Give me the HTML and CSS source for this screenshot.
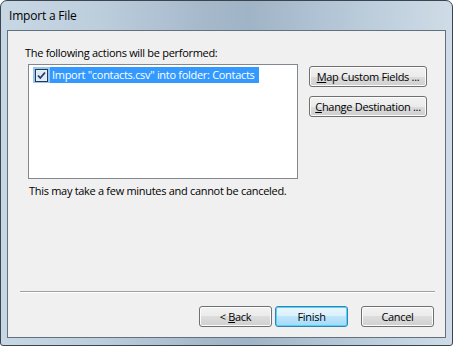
FILE: index.html
```html
<!DOCTYPE html>
<html lang="en">
<head>
    <meta charset="UTF-8">
    <title>Import a File</title>
    <link rel="stylesheet" href="styles.css">
</head>
<body>
    <div class="window">
        <div class="titlebar">Import a File</div>
        <div class="client">
            <p class="intro">The following actions will be performed:</p>
            <div class="main-row">
                <div class="listbox">
                    <div class="list-item">
                        <span class="check-cell">
                            <svg class="checkbox" viewBox="0 0 13 13" width="13" height="13">
                                <rect x="0.5" y="0.5" width="12" height="12" fill="#f4f4f4" stroke="#1c3a5e"/>
                                <rect x="1.5" y="1.5" width="10" height="10" fill="#dfe9f5"/>
                                <path d="M3 6.5L5.3 9L10 3.5" fill="none" stroke="#1f3c6b" stroke-width="1.8"/>
                            </svg>
                        </span>
                        <span class="item-text">Import "contacts.csv" into folder: Contacts</span>
                    </div>
                </div>
                <div class="side-buttons">
                    <button class="btn wide"><u>M</u>ap Custom Fields ...</button>
                    <button class="btn wide"><u>C</u>hange Destination ...</button>
                </div>
            </div>
            <p class="note">This may take a few minutes and cannot be canceled.</p>
            <div class="footer">
                <hr class="separator">
                <div class="footer-buttons">
                    <button class="btn">&lt; <u>B</u>ack</button>
                    <button class="btn default">Finish</button>
                    <button class="btn cancel">Cancel</button>
                </div>
            </div>
        </div>
    </div>
</body>
</html>
```

FILE: styles.css
```css
html, body {
    margin: 0;
    padding: 0;
    background: #ffffff;
}
body {
    font-family: "Open Sans", "Noto Sans", sans-serif;
    font-size: 11px;
    letter-spacing: -0.3px;
    color: #000;
}
.window {
    box-sizing: border-box;
    width: 453px;
    height: 346px;
    border: 1px solid #3b4550;
    border-radius: 7px 7px 3px 3px;
    padding: 0 6px 7px 6px;
    display: flex;
    flex-direction: column;
    background:
        linear-gradient(to right, #c8d7e4 0%, #bccddc 22%, #a6b9cb 45%, #a0b4c7 55%, #b5c7d7 75%, #cfdce7 100%);
}
.titlebar {
    height: 29px;
    line-height: 30px;
    padding-left: 2px;
    font-size: 12px;
    letter-spacing: -0.2px;
    color: #000;
}
.client {
    flex: 1;
    border: 1px solid #62717f;
    background: #f0f0f0;
    display: flex;
    flex-direction: column;
}
.intro {
    margin: 14px 0 0 17px;
    line-height: 16px;
}
.main-row {
    display: flex;
    align-items: flex-start;
    margin: 3px 0 0 20px;
}
.listbox {
    box-sizing: border-box;
    width: 270px;
    height: 115px;
    background: #fff;
    border: 1px solid #828790;
    padding: 2px 0 0 4px;
}
.list-item {
    display: flex;
    height: 16px;
    line-height: 16px;
}
.check-cell {
    display: flex;
    align-items: center;
    padding: 0 2px 0 2px;
    background: #99c4ee;
}
.item-text {
    background: #3399ff;
    color: #fff;
    padding: 0 4px 0 2px;
}
.side-buttons {
    display: flex;
    flex-direction: column;
    gap: 9px;
    margin: 2px 0 0 11px;
}
.btn {
    box-sizing: border-box;
    height: 21px;
    width: 73px;
    padding: 0;
    font-family: inherit;
    font-size: 11px;
    letter-spacing: inherit;
    color: #000;
    border: 1px solid #707070;
    border-radius: 3px;
    background: linear-gradient(to bottom, #f2f2f2 0%, #ebebeb 50%, #dddddd 50%, #cfcfcf 100%);
    box-shadow: inset 0 0 0 1px #fcfcfc;
}
.btn.wide {
    width: 118px;
    text-align: center;
}
.btn.default {
    border-color: #3c7fb1;
    box-shadow: inset 0 0 0 1px #48d8fb;
    background: linear-gradient(to bottom, #eaf6fd 0%, #d9f0fc 50%, #bee6fd 50%, #a7d9f5 100%);
}
.note {
    margin: 4px 0 0 21px;
    line-height: 16px;
}
.footer {
    margin-top: auto;
    padding-bottom: 10px;
}
.separator {
    border: none;
    border-top: 1px solid #a0a0a0;
    border-bottom: 1px solid #ffffff;
    margin: 0 10px 0 12px;
}
.footer-buttons {
    display: flex;
    justify-content: flex-end;
    gap: 3px;
    margin: 13px 11px 0 0;
}
.btn.cancel {
    margin-left: 10px;
}
```
